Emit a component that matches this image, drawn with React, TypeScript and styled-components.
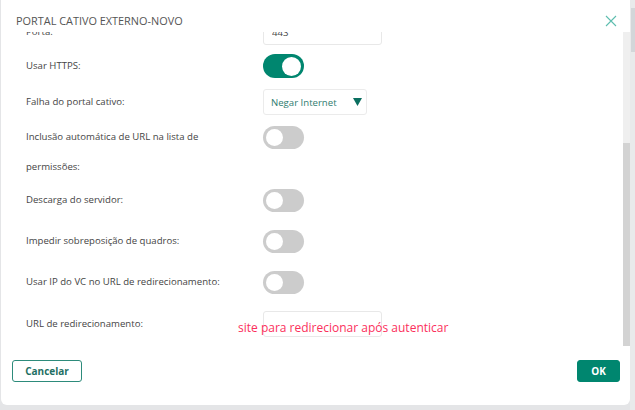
import React, { useLayoutEffect, useRef, useState } from "react";
import styled, { createGlobalStyle } from "styled-components";

const GlobalStyle = createGlobalStyle`
  html, body { margin: 0; padding: 0; background: #e4e5e7; overflow: hidden; }
  body { font-family: "Open Sans", "Noto Sans", sans-serif; }
  * { box-sizing: border-box; }
`;

const Screen = styled.div`
  display: flex;
  align-items: flex-start;
  width: 635px;
  height: 410px;
  overflow: hidden;
  padding-left: 1px;
`;

const Dialog = styled.div`
  position: relative;
  flex: 0 0 629px;
  height: 411px;
  margin-top: -6px;
  background: #fff;
  border-radius: 6px;
  display: flex;
  flex-direction: column;
`;

const PageScroll = styled.div`
  flex: 1;
  height: 410px;
  padding-top: 8px;
  background: #e9eaeb;
`;

const PageThumb = styled.div`
  height: 44px;
  margin-left: 1px;
  background: #d3d6d9;
`;

const Header = styled.div`
  flex: 0 0 38px;
  display: flex;
  align-items: flex-start;
  justify-content: space-between;
  padding: 20px 13px 0 15px;
`;

const Title = styled.div`
  font-size: 10.9px;
  line-height: 14px;
  color: #555;
`;

const Close = styled.button`
  border: 0;
  background: none;
  padding: 0;
  margin-top: 1px;
  width: 12px;
  height: 12px;
  display: flex;
  cursor: pointer;
`;

const BodyFrame = styled.div`
  flex: 0 0 314px;
  display: flex;
  min-height: 0;
`;

const Viewport = styled.div`
  flex: 1;
  overflow-y: auto;
  padding: 16px 0 7px 25px;
  scrollbar-width: none;
  &::-webkit-scrollbar { display: none; }
`;

const Track = styled.div`
  flex: 0 0 7px;
  background: #efefef;
`;

const Thumb = styled.div`
  width: 7px;
  background: #d3d3d3;
`;

const Row = styled.div<{ $space: number }>`
  display: flex;
  align-items: flex-start;
  margin-bottom: ${(p) => p.$space}px;
`;

const Label = styled.div`
  flex: 0 0 237px;
  padding-right: 22px;
  font-size: 9.6px;
  line-height: 30px;
  color: #454545;
`;

const Control = styled.div`
  height: 30px;
  display: flex;
  align-items: center;
`;

const TextInput = styled.input`
  width: 119px;
  height: 26px;
  border: 1px solid #e8e8e8;
  border-radius: 3px;
  padding: 0 8px;
  font-family: inherit;
  font-size: 9.6px;
  color: #444;
  outline: none;
`;

const Select = styled.div`
  width: 104px;
  height: 26px;
  border: 1px solid #ebebeb;
  border-radius: 3px;
  padding: 0 4px 0 7px;
  display: flex;
  align-items: center;
  justify-content: space-between;
  font-size: 9.6px;
  color: #2f7c70;
`;

const Switch = styled.div<{ $on: boolean }>`
  width: 41px;
  height: ${(p) => (p.$on ? 24 : 23)}px;
  border-radius: 12px;
  background: ${(p) => (p.$on ? "#00866f" : "#cccccc")};
  display: flex;
  align-items: center;
  justify-content: ${(p) => (p.$on ? "flex-end" : "flex-start")};
  padding: 0 3px;
`;

const Knob = styled.div<{ $on: boolean }>`
  width: ${(p) => (p.$on ? 19 : 17)}px;
  height: ${(p) => (p.$on ? 19 : 17)}px;
  border-radius: 50%;
  background: #fff;
`;

const Footer = styled.div`
  flex: 1;
  display: flex;
  justify-content: space-between;
  align-items: flex-start;
  padding: 14px 10px 0 11px;
`;

const Button = styled.button<{ $primary?: boolean }>`
  height: 22px;
  min-width: ${(p) => (p.$primary ? 43 : 70)}px;
  border-radius: 3px;
  border: 1.5px solid ${(p) => (p.$primary ? "#00866f" : "#2d8b7b")};
  background: ${(p) => (p.$primary ? "#00866f" : "#fff")};
  color: ${(p) => (p.$primary ? "#fff" : "#1f6f63")};
  font-family: inherit;
  font-weight: 700;
  font-size: 10px;
  padding: 0 10px;
  cursor: pointer;
`;

const Note = styled.div`
  position: absolute;
  left: 237px;
  top: 325px;
  font-family: "Open Sans", "Noto Sans", sans-serif;
  font-size: 12px;
  line-height: 18px;
  color: #fb2f5c;
  white-space: nowrap;
  pointer-events: none;
`;

type Kind = "input" | "toggle-on" | "toggle-off" | "select";

const rows: { label: string; kind: Kind; value?: string; space: number }[] = [
  { label: "Nome:", kind: "input", value: "portal", space: 5 },
  { label: "Endereço do servidor:", kind: "input", value: "", space: 5 },
  { label: "Caminho da URL:", kind: "input", value: "/", space: 5 },
  { label: "Chave de autenticação:", kind: "input", value: "", space: 5 },
  { label: "Porta:", kind: "input", value: "443", space: 4 },
  { label: "Usar HTTPS:", kind: "toggle-on", space: 6 },
  { label: "Falha do portal cativo:", kind: "select", value: "Negar Internet", space: 5 },
  { label: "Inclusão automática de URL na lista de permissões:", kind: "toggle-off", space: 3 },
  { label: "Descarga do servidor:", kind: "toggle-off", space: 11 },
  { label: "Impedir sobreposição de quadros:", kind: "toggle-off", space: 11 },
  { label: "Usar IP do VC no URL de redirecionamento:", kind: "toggle-off", space: 12 },
  { label: "URL de redirecionamento:", kind: "input", value: "", space: 0 },
];

function renderControl(kind: Kind, value?: string) {
  if (kind === "input") return <TextInput defaultValue={value} />;
  if (kind === "select")
    return (
      <Select>
        <span>{value}</span>
        <svg width="9" height="8" viewBox="0 0 9 8">
          <polygon points="0,0 9,0 4.5,8" fill="#0b6f60" />
        </svg>
      </Select>
    );
  const on = kind === "toggle-on";
  return (
    <Switch $on={on}>
      <Knob $on={on} />
    </Switch>
  );
}

export default function App() {
  const viewRef = useRef<HTMLDivElement>(null);
  const [thumb, setThumb] = useState({ top: 0, height: 0 });

  const measure = () => {
    const el = viewRef.current;
    if (!el) return;
    const { scrollTop, scrollHeight, clientHeight } = el;
    setThumb({
      top: (scrollTop / scrollHeight) * clientHeight,
      height: (clientHeight / scrollHeight) * clientHeight,
    });
  };

  useLayoutEffect(() => {
    const el = viewRef.current;
    if (el) el.scrollTop = el.scrollHeight;
    measure();
  }, []);

  return (
    <>
      <GlobalStyle />
      <Screen>
        <Dialog>
          <Header>
            <Title>PORTAL CATIVO EXTERNO-NOVO</Title>
            <Close aria-label="Fechar">
              <svg width="12" height="12" viewBox="0 0 12 12">
                <path d="M1 1 L11 11 M11 1 L1 11" stroke="#5dbdaf" strokeWidth="1.1" />
              </svg>
            </Close>
          </Header>
          <BodyFrame>
            <Viewport ref={viewRef} onScroll={measure}>
              {rows.map((r) => (
                <Row key={r.label} $space={r.space}>
                  <Label>{r.label}</Label>
                  <Control>{renderControl(r.kind, r.value)}</Control>
                </Row>
              ))}
            </Viewport>
            <Track>
              <Thumb style={{ marginTop: thumb.top, height: thumb.height }} />
            </Track>
          </BodyFrame>
          <Footer>
            <Button>Cancelar</Button>
            <Button $primary>OK</Button>
          </Footer>
          <Note>site para redirecionar após autenticar</Note>
        </Dialog>
        <PageScroll>
          <PageThumb />
        </PageScroll>
      </Screen>
    </>
  );
}
